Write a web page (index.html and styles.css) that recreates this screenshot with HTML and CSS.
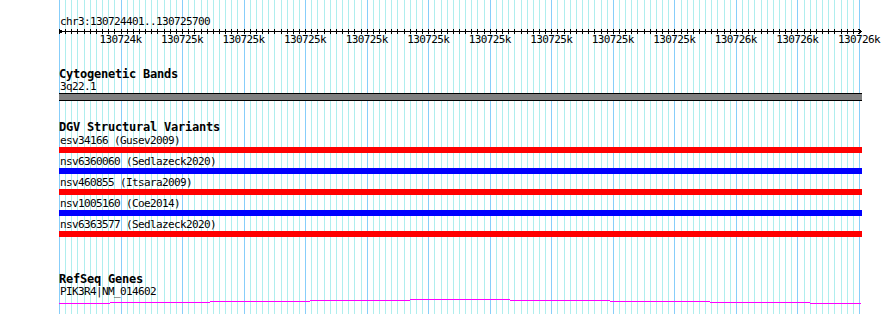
FILE: index.html
```html
<!DOCTYPE html>
<html lang="en">
<head>
    <meta charset="UTF-8">
    <meta name="viewport" content="width=device-width, initial-scale=1.0">
    <title>Genome Browser</title>
    <link rel="stylesheet" href="styles.css">
</head>
<body>
    <div class="browser">
        <svg class="grid" id="grid" width="890" height="314"></svg>
        <div class="panel">
            <div class="locus">chr3:130724401..130725700</div>
            <svg class="ruler" id="ruler" width="803" height="6"></svg>
            <div class="scale">
                <span>130724k</span>
                <span>130725k</span>
                <span>130725k</span>
                <span>130725k</span>
                <span>130725k</span>
                <span>130725k</span>
                <span>130725k</span>
                <span>130725k</span>
                <span>130725k</span>
                <span>130725k</span>
                <span>130726k</span>
                <span>130726k</span>
                <span>130726k</span>
            </div>

            <div class="track cyto">
                <div class="track-title">Cytogenetic Bands</div>
                <div class="label">3q22.1</div>
                <div class="band"></div>
            </div>

            <div class="track dgv">
                <div class="track-title">DGV Structural Variants</div>
                <div class="features">
                    <div class="feature">
                        <div class="label">esv34166 (Gusev2009)</div>
                        <div class="bar loss"></div>
                    </div>
                    <div class="feature">
                        <div class="label">nsv6360060 (Sedlazeck2020)</div>
                        <div class="bar gain"></div>
                    </div>
                    <div class="feature">
                        <div class="label">nsv460855 (Itsara2009)</div>
                        <div class="bar loss"></div>
                    </div>
                    <div class="feature">
                        <div class="label">nsv1005160 (Coe2014)</div>
                        <div class="bar gain"></div>
                    </div>
                    <div class="feature">
                        <div class="label">nsv6363577 (Sedlazeck2020)</div>
                        <div class="bar loss"></div>
                    </div>
                </div>
            </div>

            <div class="track refseq">
                <div class="track-title">RefSeq Genes</div>
                <div class="label">PIK3R4|NM_014602</div>
                <svg class="gene" width="802" height="7">
                    <path d="M0 5.5H51M51 4.5H151M151 3.5H251M251 2.5H351M351 1.5H451M451 2.5H551M551 3.5H651M651 4.5H751M751 5.5H802"/>
                </svg>
            </div>
        </div>
    </div>
    <script>
        const NS = 'http://www.w3.org/2000/svg';
        let grid = document.getElementById('grid');
        let ruler = document.getElementById('ruler');

        function addLine(svg, x1, y1, x2, y2, cls) {
            let line = document.createElementNS(NS, 'line');
            line.setAttribute('x1', x1);
            line.setAttribute('y1', y1);
            line.setAttribute('x2', x2);
            line.setAttribute('y2', y2);
            if (cls) line.setAttribute('class', cls);
            svg.appendChild(line);
        }

        // 1300bp over 800px: a line every 10bp, a darker one every 100bp
        for (let i = 0; i <= 130; i++) {
            let x = Math.round(i * 800 / 130) + 0.5;
            addLine(grid, x + 59, 0, x + 59, 314, i % 10 == 0 ? 'major' : 'minor');
            addLine(ruler, x, 1, x, 5.5);
        }
        addLine(ruler, 0, 3.5, 802, 3.5);

        let arrows = document.createElementNS(NS, 'path');
        arrows.setAttribute('d', 'M3.5 1.5L0.5 3.5L3.5 5.5M799.5 1.5L802.5 3.5L799.5 5.5');
        ruler.appendChild(arrows);
    </script>
</body>
</html>
```

FILE: styles.css
```css
body{
    margin: 0;
    background-color: #ffffff;
    font-family: "DejaVu Sans Mono", "Liberation Mono", monospace;
    color: #000000;
}
.browser{
    position: relative;
    width: 890px;
    height: 314px;
    overflow: hidden;
}
.grid{
    position: absolute;
    top: 0;
    left: 0;
}
.grid line{
    stroke-width: 1;
    shape-rendering: crispEdges;
}
.grid .minor{
    stroke: #afeeee;
}
.grid .major{
    stroke: #87cefa;
}
.panel{
    position: relative;
    padding: 15px 0 0 59px;
}
.locus, .label, .scale{
    font-size: 11px;
    letter-spacing: -0.62px;
    line-height: 12px;
    white-space: nowrap;
}
.locus{
    line-height: 13px;
    padding-left: 1px;
}
.ruler{
    display: block;
    overflow: visible;
    shape-rendering: crispEdges;
}
.ruler line, .ruler path{
    stroke: #000000;
    stroke-width: 1;
    fill: none;
}
.scale{
    display: flex;
    margin-left: 30.77px;
}
.scale span{
    flex: 0 0 61.54px;
    text-align: center;
}
.label{
    padding-left: 1px;
}
.track-title{
    font-size: 12px;
    font-weight: bold;
    letter-spacing: -0.22px;
    line-height: 13px;
    white-space: nowrap;
}
.cyto{
    margin-top: 22px;
}
.band{
    width: 803px;
    height: 6px;
    background-color: #808080;
    border-top: 1px solid #000000;
    border-bottom: 1px solid #000000;
}
.dgv{
    margin-top: 20px;
}
.features{
    display: flex;
    flex-direction: column;
    gap: 3px;
    margin-top: 1px;
}
.bar{
    width: 803px;
    height: 6px;
}
.bar.loss{
    background-color: #ff0000;
}
.bar.gain{
    background-color: #0000ff;
}
.refseq{
    margin-top: 36px;
}
.gene{
    display: block;
    shape-rendering: crispEdges;
}
.gene path{
    stroke: #ff00ff;
    stroke-width: 1;
    fill: none;
}
```
